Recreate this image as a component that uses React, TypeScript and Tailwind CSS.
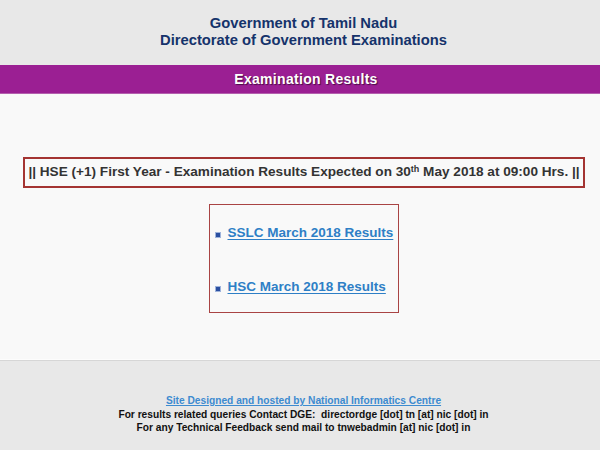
const Bullet = () => <span className="inline-block w-[4px] h-[4px] bg-[#2a4fa0] mr-[8px] mt-[4px] shadow-[0_0_0_1px_#9fb4dc]" />;

const ResultLink = ({ label }: { label: string }) => (
  <div className="flex items-center">
    <Bullet />
    <a href="#" className="text-[13.5px] font-bold text-[#2e7fc6] underline underline-offset-2 decoration-1">
      {label}
    </a>
  </div>
);

const App = () => {
  return (
    <div className="w-[600px] h-[450px] flex flex-col bg-[#f9f9f9] font-['Liberation_Sans',Arial,sans-serif]">
      <div className="h-[65px] bg-[#e8e8e8] flex flex-col items-center justify-center pb-[2px] pl-[7px]">
        <h1 className="text-[14.75px] font-bold text-[#15336b] leading-[17px]">Government of Tamil Nadu</h1>
        <h2 className="text-[14.75px] font-bold text-[#15336b] leading-[17px]">Directorate of Government Examinations</h2>
      </div>

      <div className="h-[29px] bg-[#9b1f93] border-b border-[#b45fae] flex items-center justify-center pl-[12px]">
        <span className="text-[14px] font-bold text-white tracking-[0.3px] [text-shadow:1px_1px_1px_#4a0d46]">Examination Results</span>
      </div>

      <div className="h-[266px] flex flex-col items-center pl-[7px]">
        <div className="mt-[63px] ml-[1px] w-[562px] h-[31px] border-2 border-[#a43432] flex items-center justify-center">
          <p className="text-[13.6px] font-bold text-[#333333]">
            || HSE (+1) First Year - Examination Results Expected on 30<sup className="text-[9px]">th</sup> May 2018 at 09:00 Hrs. ||
          </p>
        </div>

        <div className="mt-[16px] w-[190px] h-[109px] border border-[#a94444] flex flex-col gap-[34px] pl-[6px] pt-[18px]">
          <ResultLink label="SSLC March 2018 Results" />
          <ResultLink label="HSC March 2018 Results" />
        </div>
      </div>

      <div className="flex-1 bg-[#e8e8e8] border-t border-[#d6d6d6] shadow-[0_-1px_0_#fdfdfd] flex flex-col items-center pt-[33px] pl-[7px] text-[10.2px] font-bold leading-[13.5px]">
        <a href="#" className="text-[#3d8bd0] underline">Site Designed and hosted by National Informatics Centre</a>
        <p className="text-[#111111]">For results related queries Contact DGE:&nbsp; directordge [dot] tn [at] nic [dot] in</p>
        <p className="text-[#111111]">For any Technical Feedback send mail to tnwebadmin [at] nic [dot] in</p>
      </div>
    </div>
  );
};

export default App;
